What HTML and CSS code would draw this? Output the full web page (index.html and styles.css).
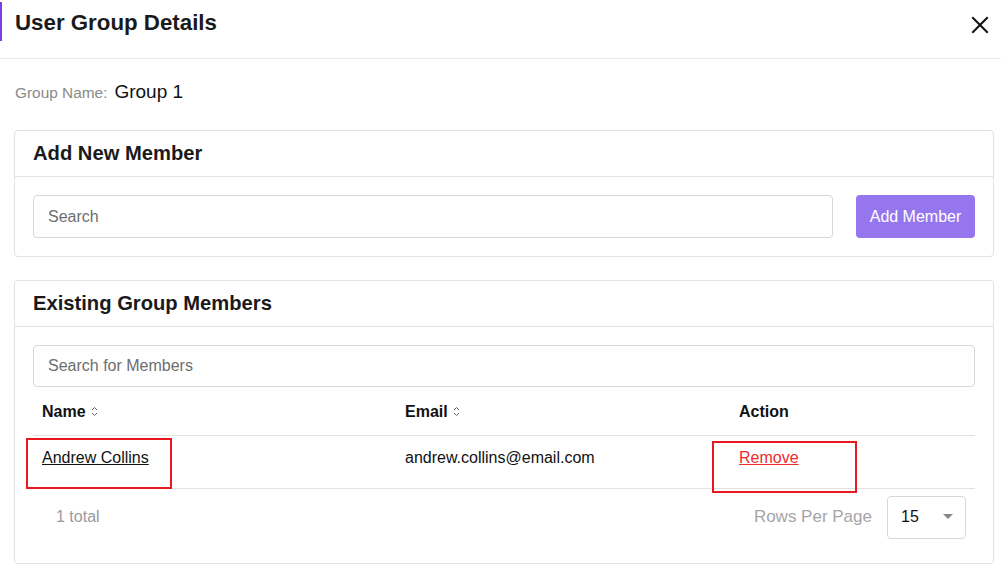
FILE: index.html
```html
<!DOCTYPE html>
<html>
<head>
<meta charset="utf-8">
<link rel="stylesheet" href="styles.css">
</head>
<body>
<div class="modal">
  <div class="modal-header">
    <h1 class="title">User Group Details</h1>
    <button class="close" aria-label="Close">
      <svg width="18" height="18" viewBox="0 0 18 18"><path d="M2 2L16 16M16 2L2 16" stroke="#111" stroke-width="2" stroke-linecap="square" fill="none"/></svg>
    </button>
  </div>
  <div class="modal-body">
    <div class="group-name"><span class="gn-label">Group Name:</span> <span class="gn-value">Group 1</span></div>

    <section class="card">
      <div class="card-header">Add New Member</div>
      <div class="card-body add-row">
        <input class="input grow" type="text" placeholder="Search">
        <button class="btn-primary">Add Member</button>
      </div>
    </section>

    <section class="card">
      <div class="card-header">Existing Group Members</div>
      <div class="card-body members">
        <input class="input" type="text" placeholder="Search for Members">
        <table class="table">
          <thead>
            <tr>
              <th class="c-name">Name <span class="sort"><svg width="7" height="11" viewBox="0 0 7 11"><path d="M1 4L3.5 1.5L6 4M1 7L3.5 9.5L6 7" stroke="#666" stroke-width="1" fill="none"/></svg></span></th>
              <th class="c-email">Email <span class="sort"><svg width="7" height="11" viewBox="0 0 7 11"><path d="M1 4L3.5 1.5L6 4M1 7L3.5 9.5L6 7" stroke="#666" stroke-width="1" fill="none"/></svg></span></th>
              <th class="c-action">Action</th>
            </tr>
          </thead>
          <tbody>
            <tr>
              <td><a href="#" class="name-link">Andrew Collins</a><span class="mark mark-name"></span></td>
              <td>andrew.collins@email.com</td>
              <td><a href="#" class="remove-link">Remove</a><span class="mark mark-remove"></span></td>
            </tr>
          </tbody>
        </table>
        <div class="footer">
          <span class="total">1 total</span>
          <div class="rpp">
            <span class="rpp-label">Rows Per Page</span>
            <div class="select"><span>15</span><svg width="10" height="6" viewBox="0 0 10 6"><path d="M0 0H10L5 5Z" fill="#888"/></svg></div>
          </div>
        </div>
      </div>
    </section>
  </div>
</div>
</body>
</html>
```
FILE: styles.css
```css
* { box-sizing: border-box; }
html, body { margin: 0; padding: 0; background: #fff; }
body { font-family: "Liberation Sans", Arial, sans-serif; color: #111; width: 1001px; height: 581px; overflow: hidden; }

.modal { width: 1001px; }
.modal-header {
  display: flex; align-items: center; justify-content: space-between;
  height: 59px; border-bottom: 1px solid #e8e8e8; position: relative;
  padding: 0 12px 0 15px;
}
.modal-header::before {
  content: ""; position: absolute; left: 0; top: 2px; width: 2px; height: 39px; background: #7b3fe4;
}
.title { margin: 0; font-size: 22.3px; font-weight: 700; color: #1a1a1a; position: relative; top: -6px; }
.close { border: 0; background: none; padding: 0; width: 18px; height: 18px; cursor: pointer; position: relative; top: -4px; }
.close svg { display: block; }

.modal-body { padding: 22px 7px 0 14px; }
.group-name { display: flex; align-items: baseline; gap: 7px; padding-left: 1px; height: 29px; }
.gn-label { font-size: 15.4px; color: #8a8a8a; }
.gn-value { font-size: 19px; color: #111; }

.card { border: 1px solid #e2e2e2; border-radius: 4px; margin-top: 20px; }
.card + .card { margin-top: 23px; }
.card-header {
  height: 46px; padding: 0 18px; display: flex; align-items: center;
  font-size: 20.2px; font-weight: 700; color: #1a1a1a; border-bottom: 1px solid #e2e2e2;
}
.card-body { padding: 18px 18px 18px 18px; }
.add-row { display: flex; gap: 23px; }
.input {
  height: 43px; border: 1px solid #d8d8d8; border-radius: 4px; padding: 0 14px;
  font: 16px "Liberation Sans", Arial, sans-serif; color: #111; outline: none; width: 100%;
}
.members .input { height: 42px; }
.input::placeholder { color: #6e6e6e; }
.grow { flex: 1; }
.btn-primary {
  flex: none; width: 119px; height: 43px; border: 0; border-radius: 4px;
  background: #9676ef; color: #fff; font: 16px "Liberation Sans", Arial, sans-serif;
}

.members { padding-bottom: 24px; }
.table { width: 100%; border-collapse: collapse; margin-top: 0; }
.table th { text-align: left; font-size: 16px; font-weight: 700; height: 48px; padding: 2px 9px 0; border-bottom: 1px solid #e2e2e2; color: #111; }
.table td { font-size: 16px; height: 53px; padding: 1px 9px 9px; border-bottom: 1px solid #e2e2e2; vertical-align: middle; position: relative; color: #111; }
.c-name { width: 363px; }
.c-email { width: 334px; }
.sort svg { vertical-align: 0; margin-left: 1px; }
.name-link { color: #111; text-decoration: underline; }
.remove-link { color: #f02a2a; text-decoration: underline; }
.mark { position: absolute; border: 2px solid #e8191e; pointer-events: none; }
.mark-name { left: -7px; top: 2px; width: 146px; height: 51px; }
.mark-remove { left: -18px; top: 5px; width: 145px; height: 52px; }

.footer { display: flex; justify-content: space-between; align-items: center; padding: 7px 9px 0 23px; }
.total { color: #9a9a9a; font-size: 16px; }
.rpp { display: flex; align-items: center; gap: 15px; }
.rpp-label { color: #a5a5a5; font-size: 17px; }
.select {
  width: 79px; height: 43px; border: 1px solid #d8d8d8; border-radius: 4px;
  display: flex; align-items: center; justify-content: space-between; padding: 0 12px 0 13px;
  font-size: 16px; color: #111;
}
```
